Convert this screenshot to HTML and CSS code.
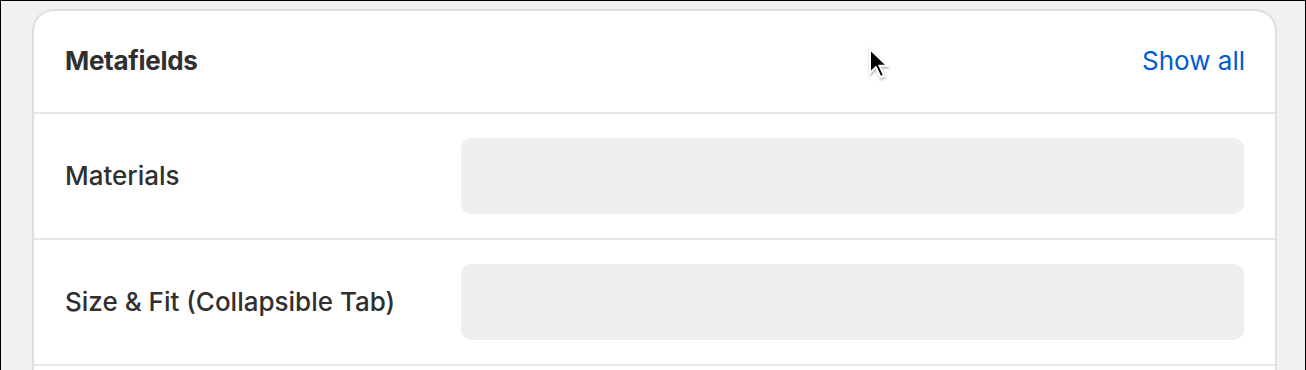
FILE: index.html
```html
<!DOCTYPE html>
<html lang="en">
<head>
<meta charset="utf-8">
<title>Metafields</title>
<link rel="stylesheet" href="styles.css">
</head>
<body>
<div class="frame">
  <section class="card">
    <header class="card-header">
      <h2 class="title">Metafields</h2>
      <a class="link" href="#">Show all</a>
    </header>
    <div class="row">
      <div class="label">Materials</div>
      <div class="field"></div>
    </div>
    <div class="row">
      <div class="label">Size &amp; Fit (Collapsible Tab)</div>
      <div class="field"></div>
    </div>
  </section>
  <svg class="cursor" width="28" height="40" viewBox="0 0 28 40" aria-hidden="true">
    <defs>
      <filter id="sh" x="-30%" y="-30%" width="160%" height="160%">
        <feDropShadow dx="0.5" dy="1.5" stdDeviation="1.2" flood-color="#000" flood-opacity="0.35"/>
      </filter>
    </defs>
    <path filter="url(#sh)" d="M3 2 L3 30 L9.6 23.6 L14 33.5 L19 31.4 L14.8 21.8 L23.6 21.8 Z" fill="#fff"/>
    <path d="M5 6.6 L5 25.4 L10.2 20.4 L15 30.8 L16.6 30.1 L12 19.8 L18.8 19.8 Z" fill="#000"/>
  </svg>
</div>
</body>
</html>
```
FILE: styles.css
```css
html, body {
  margin: 0;
  padding: 0;
  height: 100%;
  overflow: hidden;
}
body {
  background: #000;
  font-family: Inter, "Noto Sans", "Liberation Sans", sans-serif;
  color: #303030;
}
.frame {
  position: relative;
  margin: 1px 1px 0 1px;
  height: calc(100% - 1px);
  background: #f1f1f1;
  padding: 8px 28px 0 31px;
  box-sizing: border-box;
}
.card {
  background: #fff;
  border: 2px solid #dedede;
  border-bottom: none;
  border-radius: 22px 22px 0 0;
  height: 420px;
  box-sizing: border-box;
}
.card-header {
  display: flex;
  align-items: center;
  justify-content: space-between;
  height: 103px;
  padding: 0 30px 3px 31px;
  box-sizing: border-box;
  border-bottom: 2px solid #e6e6e6;
}
.title {
  margin: 0;
  font-size: 26px;
  font-weight: 700;
  letter-spacing: -0.3px;
}
.link {
  color: #005bd3;
  text-decoration: none;
  font-size: 26px;
  font-weight: 400;
}
.row {
  display: grid;
  grid-template-columns: 1fr 2fr;
  column-gap: 5px;
  align-items: center;
  padding: 24px 31px;
  border-bottom: 2px solid #e6e6e6;
}
.label {
  font-size: 26px;
  font-weight: 500;
  padding-bottom: 2px;
}
.field {
  height: 76px;
  background: #efefef;
  border-radius: 10px;
}
.cursor {
  position: absolute;
  left: 865px;
  top: 44px;
}
```
